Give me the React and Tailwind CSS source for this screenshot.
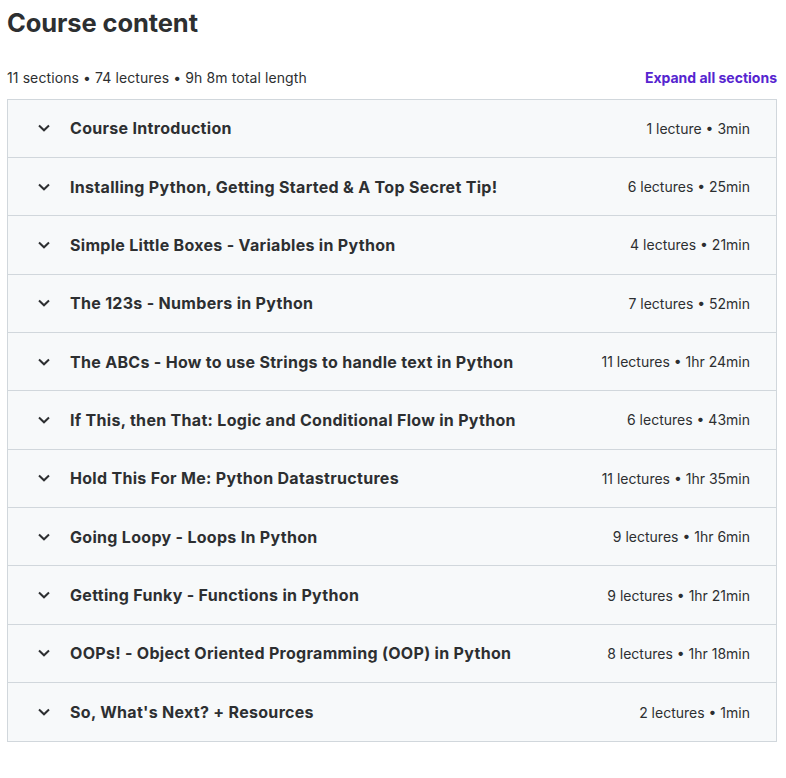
const sections = [
  { title: 'Course Introduction', meta: '1 lecture • 3min' },
  { title: 'Installing Python, Getting Started & A Top Secret Tip!', meta: '6 lectures • 25min' },
  { title: 'Simple Little Boxes - Variables in Python', meta: '4 lectures • 21min' },
  { title: 'The 123s - Numbers in Python', meta: '7 lectures • 52min' },
  { title: 'The ABCs - How to use Strings to handle text in Python', meta: '11 lectures • 1hr 24min' },
  { title: 'If This, then That: Logic and Conditional Flow in Python', meta: '6 lectures • 43min' },
  { title: 'Hold This For Me: Python Datastructures', meta: '11 lectures • 1hr 35min' },
  { title: 'Going Loopy - Loops In Python', meta: '9 lectures • 1hr 6min' },
  { title: 'Getting Funky - Functions in Python', meta: '9 lectures • 1hr 21min' },
  { title: 'OOPs! - Object Oriented Programming (OOP) in Python', meta: '8 lectures • 1hr 18min' },
  { title: "So, What's Next? + Resources", meta: '2 lectures • 1min' },
]

function Chevron() {
  return (
    <svg width="12" height="8" viewBox="0 0 12 8" className="mr-[20px] shrink-0">
      <polyline points="1,1.5 6,6.3 11,1.5" fill="none" stroke="#2d2f31" strokeWidth="2" />
    </svg>
  )
}

export default function App() {
  return (
    <div className="bg-white text-[#2d2f31] pl-[7px] pr-[9px] font-['Inter',sans-serif]">
      <h2 className="text-[25.5px] font-bold leading-none pt-[10px] tracking-[-0.1px]">Course content</h2>
      <div className="flex items-center justify-between mt-[35px] mb-[14px] text-[14px] leading-none">
        <span className="tracking-[0.1px]">11 sections • 74 lectures • 9h 8m total length</span>
        <button className="font-bold text-[#5624d0]">Expand all sections</button>
      </div>
      <div className="border border-[#d1d7dc]">
        {sections.map((s, i) => (
          <div
            key={i}
            className={`flex items-center h-[58.36px] bg-[#f7f9fa] pl-[30px] pr-[26px] ${i < sections.length - 1 ? 'border-b border-[#d1d7dc]' : ''}`}
          >
            <Chevron />
            <span className="flex-1 text-[16px] font-bold tracking-[0.3px]">{s.title}</span>
            <span className="text-[14px]">{s.meta}</span>
          </div>
        ))}
      </div>
    </div>
  )
}
